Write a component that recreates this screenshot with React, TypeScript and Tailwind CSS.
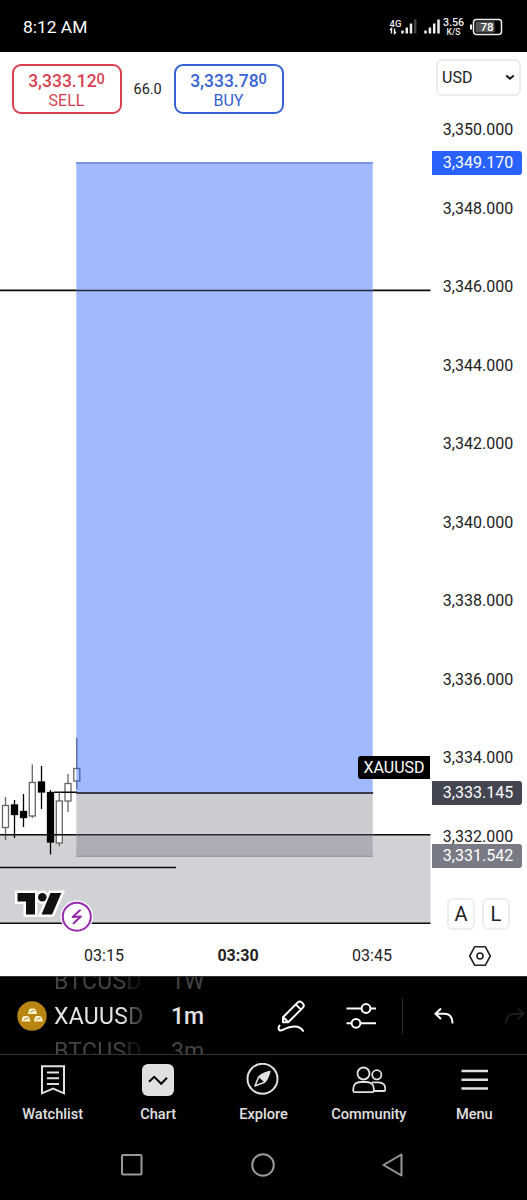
const prices = [
    "3,350.000",
    "3,348.000",
    "3,346.000",
    "3,344.000",
    "3,342.000",
    "3,340.000",
    "3,338.000",
    "3,336.000",
    "3,334.000",
    "3,332.000",
];

// x, wick top, body top, body bottom, wick bottom
const candles = [
    { x: 5.5, high: 797, top: 805, bottom: 828, low: 840, filled: false },
    { x: 14.5, high: 800, top: 804.5, bottom: 815, low: 838, filled: true },
    { x: 23.5, high: 794, top: 811, bottom: 818, low: 827, filled: true },
    { x: 32.3, high: 764.5, top: 782, bottom: 816.5, low: 818, filled: false },
    { x: 41.5, high: 766, top: 781.5, bottom: 792.5, low: 809, filled: true },
    { x: 50.5, high: 790, top: 792, bottom: 842.5, low: 854.5, filled: true },
    { x: 59.3, high: 792, top: 800.5, bottom: 843.5, low: 846.5, filled: false },
    { x: 68, high: 774, top: 783, bottom: 801.5, low: 812, filled: false },
    { x: 76.8, high: 738, top: 768, bottom: 781.5, low: 789.5, filled: false },
];

function StatusBar() {
    return (
        <div className="flex h-[52px] items-center justify-between bg-black pl-[23px] pr-6 text-white">
            <span className="text-[17.4px] leading-none pt-[3px]">8:12 AM</span>
            <div className="flex items-center pt-px">
                <svg width="31" height="18" viewBox="0 0 31 18">
                    <text x="0.5" y="8.5" fontSize="9.5" fontWeight="500" fill="#eee" textLength="12">4G</text>
                    <path d="M2.5 15.5v-5l-1.5 1.7M5.5 10.5v5l1.5-1.7" fill="none" stroke="#eee" strokeWidth="1.4" />
                    <path d="M13.5 12.5v3M17.8 9.5v6M22 5.5v10" stroke="#eee" strokeWidth="2.5" />
                    <path d="M26.2 1.5v14" stroke="#444" strokeWidth="2.5" />
                </svg>
                <svg className="ml-1" width="19" height="18" viewBox="0 0 19 18">
                    <path d="M1.5 12.5v3M5.9 9.5v6M10.2 5.5v10M14.5 1.5v14" stroke="#eee" strokeWidth="2.5" />
                </svg>
                <div className="flex w-[21px] flex-col items-center text-[#eee]">
                    <span className="text-[10.7px] leading-[10px] font-medium">3.56</span>
                    <span className="text-[8.5px] leading-[8px] font-medium">K/S</span>
                </div>
                <svg className="ml-1.5" width="33" height="18" viewBox="0 0 33 18">
                    <rect x="3.5" y="1.5" width="28" height="15" rx="3" fill="none" stroke="#eee" strokeWidth="1.5" />
                    <rect x="5.5" y="3.5" width="19" height="11" rx="1" fill="#555" />
                    <path d="M1 6.5v5" stroke="#eee" strokeWidth="2" />
                    <text x="17" y="13.2" fontSize="11.5" fontWeight="500" fill="#fff" textAnchor="middle">78</text>
                </svg>
            </div>
        </div>
    );
}

function TradeButton({ price, last, label, color }: { price: string; last: string; label: string; color: string }) {
    return (
        <div className={`flex h-[50px] w-[110px] flex-col items-center rounded-[9px] border-2 bg-white pt-[5px] ${color}`}>
            <span className="flex items-start text-[17.5px] leading-[21px] font-medium">
                {price}
                <span className="text-[14.5px] leading-[17px]">{last}</span>
            </span>
            <span className="-mt-px text-base leading-5">{label}</span>
        </div>
    );
}

function Plot() {
    return (
        <div className="relative z-10 h-[872px] w-[431px]">
            <svg className="absolute inset-0 overflow-visible" width="431" height="872" viewBox="0 52 431 872">
                {/* demand zone */}
                <rect x="0" y="835" width="430.5" height="88" fill="#d1d2d6" />

                {/* candles */}
                {candles.map((c) => (
                    <g key={c.x} stroke={c.filled ? "#000" : "#666"} strokeWidth="1.3">
                        <path d={`M${c.x} ${c.high}V${c.low}`} />
                        <rect
                            x={c.x - 3}
                            y={c.top + 0.5}
                            width="6"
                            height={c.bottom - c.top - 1}
                            fill={c.filled ? "#000" : "#fff"}
                        />
                    </g>
                ))}

                {/* long position */}
                <rect x="76.3" y="162" width="296.4" height="630.5" fill="#2962ff" fillOpacity="0.44" />
                <rect x="76.3" y="793" width="296.4" height="64" fill="#6a6d79" fillOpacity="0.35" />
                <path d="M76.3 163h296.4" stroke="#7791e4" strokeWidth="1.8" />
                <path d="M76.3 856.3h296.4" stroke="#9a9ba1" strokeWidth="1.4" />

                {/* levels */}
                <path d="M0 290.4h76.3M372.7 290.4h57.8M0 834.7h76.3M372.7 834.7h57.8M0 867.5h176M54 792.3h23M0 923.2h430.5" stroke="#0b0b0b" strokeWidth="1.6" />
                <path d="M76.3 290.4h296.4" stroke="#1c2440" strokeWidth="1.5" />
                <path d="M76.3 834.7h296.4" stroke="#2c2d33" strokeWidth="1.6" />
                <path d="M76.3 793h296.8" stroke="#363a4a" strokeWidth="2.2" />

                {/* logo */}
                <g stroke="#fff" strokeWidth="5" fill="#fff">
                    <path d="M17.5 893H35v21.5h-9V901.5h-8.5zM50.5 893h10.8l-9.2 21.5H41.5z" />
                    <circle cx="42.3" cy="897.2" r="4.2" />
                </g>
                <path d="M17.5 893H35v21.5h-9V901.5h-8.5zM50.5 893h10.8l-9.2 21.5H41.5z" fill="#111" />
                <circle cx="42.3" cy="897.2" r="4.3" fill="#111" />
                <circle cx="76.8" cy="916.7" r="16.3" fill="#fff" />
                <circle cx="76.8" cy="916.7" r="14" fill="#fff" stroke="#962bae" strokeWidth="2" />
                <path d="M80 910.3l-7.3 6.7 8.2-.6-7.3 6.8" fill="none" stroke="#962bae" strokeWidth="2" strokeLinejoin="round" strokeLinecap="round" />
            </svg>

            <div className="relative flex items-center gap-[12px] pt-3 pl-[11.5px]">
                <TradeButton price="3,333.12" last="0" label="SELL" color="border-[#d8404f] text-[#d8404f]" />
                <span className="w-7 pt-0.5 text-center text-[14.5px] text-[#222]">66.0</span>
                <TradeButton price="3,333.78" last="0" label="BUY" color="border-[#3562d4] text-[#3562d4]" />
            </div>

            <div className="absolute top-[704px] right-[1px] flex h-[23px] w-[72px] items-center justify-center rounded-l-[3px] bg-black pt-px text-base text-white">
                XAUUSD
            </div>
        </div>
    );
}

function PriceAxis() {
    return (
        <div className="relative w-24">
            <div className="mt-[7px] ml-[5px] flex h-[37px] w-[85px] items-center justify-between rounded-md border-2 border-[#ececee] pr-1 pl-1 text-base text-[#1c1c1c]">
                USD
                <svg width="10" height="7" viewBox="0 0 10 7">
                    <path d="M1.2 1.5L5 4.7l3.8-3.2" fill="none" stroke="#111" strokeWidth="1.9" />
                </svg>
            </div>
            <div className="-mt-[5px] text-base text-[#222]">
                {prices.map((p) => (
                    <div key={p} className="flex h-[78.5px] w-[94px] items-center justify-center">
                        {p}
                    </div>
                ))}
            </div>
            <div className="mt-[22px] flex gap-[7px] pl-[16px] text-[20px] text-[#222]">
                <span className="flex h-8 w-7 items-center justify-center rounded-md border-2 border-[#ededef]">A</span>
                <span className="flex h-8 w-7 items-center justify-center rounded-md border-2 border-[#ededef]">L</span>
            </div>

            {/* price tags */}
            <div className="absolute top-[99px] left-[1px] flex h-6 w-[90px] items-center justify-center rounded-r-[3px] bg-[#2962ff] pl-0.5 text-base text-white">
                3,349.170
            </div>
            <div className="absolute top-[729px] left-[1px] flex h-6 w-[90px] items-center justify-center rounded-r-[3px] bg-[#434651] pl-0.5 text-base text-white">
                3,333.145
            </div>
            <div className="absolute top-[792px] left-[1px] flex h-6 w-[90px] items-center justify-center rounded-r-[3px] bg-[#787b86] pl-0.5 text-base text-white">
                3,331.542
            </div>
        </div>
    );
}

function TimeAxis() {
    return (
        <div className="flex h-[52px] items-center pt-3 text-base text-[#222]">
            <span className="ml-[37px] w-[134px] text-center">03:15</span>
            <span className="w-[134px] text-center font-bold">03:30</span>
            <span className="w-[134px] text-center">03:45</span>
            <svg className="ml-[29px]" width="24" height="22" viewBox="0 0 24 22">
                <path d="M6.8 1.7h10.4L22.3 11l-5.1 9.3H6.8L1.7 11z" fill="none" stroke="#222" strokeWidth="1.6" strokeLinejoin="round" />
                <circle cx="12" cy="11" r="3" fill="none" stroke="#222" strokeWidth="1.6" />
            </svg>
        </div>
    );
}

function Toolbar() {
    return (
        <div className="flex h-[78px] items-center overflow-hidden border-t border-[#333] bg-black text-white">
            <svg className="ml-[17px] shrink-0" width="30" height="30" viewBox="0 0 30 30">
                <circle cx="15" cy="15" r="14.7" fill="#b98511" />
                <g fill="#fff3d0">
                    <path d="M11 13l.8-3.800q.5-1.700 2-1.700h3q1.500 0 2 1.500l1.200 4zM4.500 20.400l.8-3.600q.5-1.700 2-1.700h3q1.500 0 2 1.500l1.200 3.800zM17 20.400l.8-3.600q.5-1.700 2-1.700h3q1.500 0 2 1.500l1.200 3.800z" />
                </g>
                <path d="M13.500 11.700q.5-2 4-2.200M7 19.200q.5-2 4-2.200M19.500 19.200q.5-2 4-2.200" fill="none" stroke="#b98511" strokeWidth="1" />
            </svg>
            <div className="ml-[7px] w-[92px] shrink-0 pt-px text-[23px] leading-[35px] tracking-[0.3px] [mask-image:linear-gradient(to_right,#000_76%,rgba(0,0,0,0.4)_84%,rgba(0,0,0,0.25)_98%)]">
                <div className="text-[#444]">BTCUSD</div>
                <div className="text-[#e4e4e4]">XAUUSD</div>
                <div className="text-[#444]">BTCUSD</div>
            </div>
            <div className="ml-[25px] w-[60px] shrink-0 pt-px text-[23px] leading-[35px] font-medium">
                <div className="font-normal text-[#444]">1W</div>
                <div className="text-[#e4e4e4]">1m</div>
                <div className="font-normal text-[#444]">3m</div>
            </div>
            <svg className="ml-[46px] shrink-0" width="30" height="34" viewBox="0 0 30 34" fill="none" stroke="#fff" strokeWidth="2" strokeLinejoin="round">
                <path d="M6 18.2L20.7 3.4q2-1.8 4 0l1.2 1.2q1.8 2 0 4L11.2 23.3H6zM18.8 5.4l5.2 5.2M6.2 18l5 5.1" />
                <path d="M2.500 26.500c-2 3.500-.5 6 3.200 4.300 7-3.300 15.800-6.300 20.300 1" strokeLinecap="round" />
            </svg>
            <svg className="ml-[39px] shrink-0" width="30" height="26" viewBox="0 0 30 26" fill="none" stroke="#fff" strokeWidth="2">
                <path d="M.5 5.5H15.500M24.500 5.500H30M.5 20.300H5.500M14.500 20.300H30" />
                <circle cx="20" cy="5.500" r="4.400" />
                <circle cx="10" cy="20.300" r="4.400" />
            </svg>
            <div className="ml-[26px] h-9 w-px shrink-0 bg-[#2c2c2c]" />
            <svg className="ml-[30px] shrink-0" width="22" height="18" viewBox="0 0 22 18" fill="none" stroke="#fff" strokeWidth="2">
                <path d="M8 1.500L2.500 6.800 8 12M2.500 6.800h8.500q8.500 0 8.500 9.700" />
            </svg>
            <svg className="ml-[49px] shrink-0" width="22" height="18" viewBox="0 0 22 18" fill="none" stroke="#1f1f1f" strokeWidth="1.7">
                <path d="M14 1.500l5.500 5.300L14 12M19.500 6.800H11Q2 6.800 2 16.500" />
            </svg>
        </div>
    );
}

function TabBar() {
    return (
        <div className="grid h-[76px] grid-cols-5 border-t border-[#333] bg-black text-[14.6px] leading-5 font-medium text-[#e0e0e0]">
            <div className="flex flex-col items-center pt-2">
                <svg width="32" height="34" viewBox="0 0 32 34" fill="none" stroke="#e0e0e0" strokeWidth="2">
                    <path d="M5 3.300h22v27l-11-4.700-11 4.700z" />
                    <path d="M10 9.500h12M10 15.300h12M10 21h12" />
                </svg>
                <span className="mt-[7px]">Watchlist</span>
            </div>
            <div className="flex flex-col items-center pt-2">
                <svg width="32" height="34" viewBox="0 0 32 34">
                    <rect x="0" y="1" width="32" height="32" rx="6" fill="#e0e0e0" />
                    <path d="M7 18.800l5.200-5 7 7 5.800-6" fill="none" stroke="#000" strokeWidth="2" />
                </svg>
                <span className="mt-[7px]">Chart</span>
            </div>
            <div className="flex flex-col items-center pt-2">
                <svg width="34" height="34" viewBox="0 0 34 34">
                    <circle cx="16.500" cy="15.800" r="15" fill="none" stroke="#e0e0e0" strokeWidth="2" />
                    <path d="M23.800 8.500q-9 2.500-11.300 5.800L9 23l9.500-3.800Q21.500 16.500 23.800 8.500z" fill="none" stroke="#e0e0e0" strokeWidth="1.6" strokeLinejoin="round" />
                    <path d="M23.800 8.500q-9 2.500-11.300 5.800l5.900 4.900Q21.500 16.500 23.800 8.500z" fill="#e0e0e0" />
                </svg>
                <span className="mt-[7px]">Explore</span>
            </div>
            <div className="flex flex-col items-center pt-2">
                <svg width="34" height="34" viewBox="0 0 34 34" fill="none" stroke="#e0e0e0" strokeWidth="1.800">
                    <circle cx="11.500" cy="10.500" r="6" />
                    <circle cx="24.800" cy="11.800" r="4.600" />
                    <path d="M1.300 28q-.8-9 7.500-9h5.500q8.300 0 7.500 9-.1 1.200-1.300 1.200h-18Q1.400 29.200 1.300 28zM20 19.400h6.300q7.200 0 7 7.300 0 1.300-1.300 1.300h-10" />
                </svg>
                <span className="mt-[7px]">Community</span>
            </div>
            <div className="flex flex-col items-center pt-2">
                <svg width="28" height="34" viewBox="0 0 28 34">
                    <path d="M1.500 8h26.500M1.500 16.800h26.500M1.500 25.500h26.500" stroke="#e0e0e0" strokeWidth="2.500" />
                </svg>
                <span className="mt-[7px]">Menu</span>
            </div>
        </div>
    );
}

function SystemNav() {
    return (
        <div className="flex h-[70px] items-center justify-between bg-black pr-[123px] pl-[120px]">
            <svg width="24" height="24" viewBox="0 0 24 24" fill="none" stroke="#999" strokeWidth="2">
                <rect x="2" y="2" width="19.500" height="19.500" rx="1" />
            </svg>
            <svg width="24" height="24" viewBox="0 0 24 24" fill="none" stroke="#999" strokeWidth="2">
                <circle cx="12" cy="12" r="10.800" />
            </svg>
            <svg width="22" height="24" viewBox="0 0 22 24" fill="none" stroke="#999" strokeWidth="2" strokeLinejoin="round">
                <path d="M19.500 1.500v21L1.500 12z" />
            </svg>
        </div>
    );
}

export default function App() {
    return (
        <div className="h-[1200px] w-[527px] overflow-hidden bg-white font-['Roboto',sans-serif]">
            <StatusBar />

            {/* CHART */}
            <div className="flex h-[872px]">
                <Plot />
                <PriceAxis />
            </div>
            <TimeAxis />

            {/* BOTTOM BARS */}
            <Toolbar />
            <TabBar />
            <SystemNav />
        </div>
    );
}
